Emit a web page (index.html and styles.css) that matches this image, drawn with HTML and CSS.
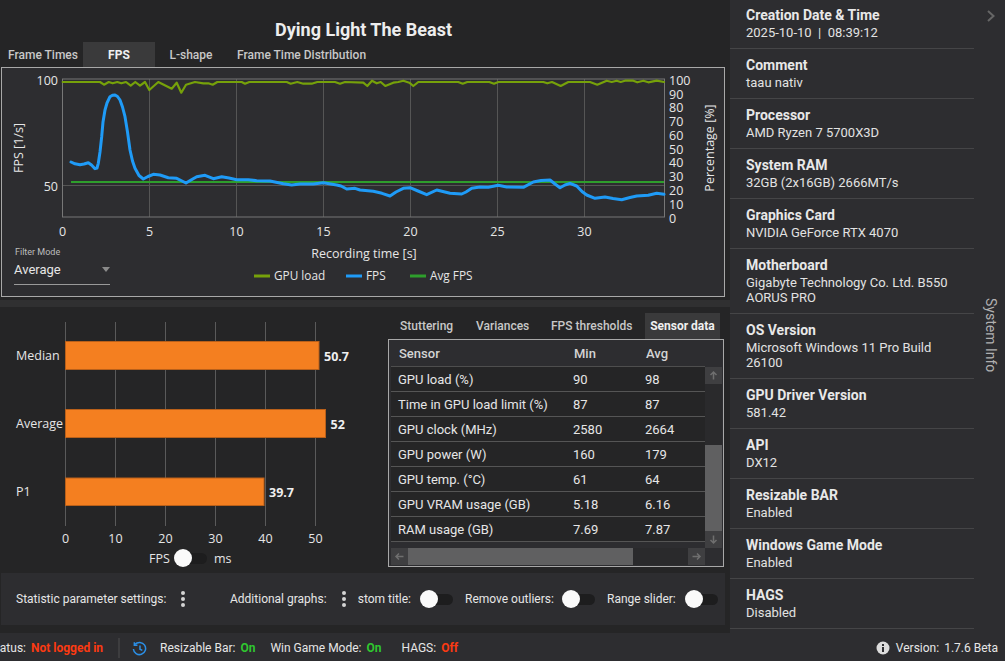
FILE: index.html
```html
<!DOCTYPE html>
<html lang="en">
<head>
<meta charset="utf-8">
<title>Dying Light The Beast</title>
<link rel="stylesheet" href="styles.css">
</head>
<body>
<div class="app">
  <main class="main">
    <h1 class="title">Dying Light The Beast</h1>
    <nav class="tabs">
      <span class="tab tab-first">Frame Times</span>
      <span class="tab active">FPS</span>
      <span class="tab">L-shape</span>
      <span class="tab">Frame Time Distribution</span>
    </nav>
    <section class="chart-card">
      <svg class="chart" viewBox="2 68 721 227" width="721" height="227">
        <g class="grid">
          <path d="M149.5 79V217M236.5 79V217M323.5 79V217M410.5 79V217M497.5 79V217M584.5 79V217M62.5 185.5H664.5"/>
        </g>
        <rect class="frame" x="62.5" y="79" width="602" height="138"/>
        <polyline class="l-gpu" points="62.7,82 100,82 104,84.7 108.7,82 112.7,83.3 117.3,82 121.3,83.3 126,82 130.7,85.7 135.3,82 140,85.7 145,82 149.3,90 158.3,82 171.7,88.7 176.7,82.7 181.3,92.7 186,84.7 195,82 203.3,83.3 208.3,83.3 212.7,84.7 217.3,82 241.7,82 245,83.7 249.3,82 286.7,82 290.7,83.7 297.3,82 303.3,83.7 311.7,83.7 317.3,82 335,82 340,83.7 345,82 363.3,82.7 367.3,86 372,80.7 376.7,83.3 380.7,82 385.3,86 393.3,82.7 398.3,82 403.3,80.7 409.3,82.7 413.3,86 418.3,82 458.3,82 462.7,83.7 467.3,82 489.3,82 494,83.7 498.3,82 543.3,82 547.3,83.3 552,82 560.7,86 568.3,82 590,82 597.3,84.7 606.7,80.7 611.7,82 616.7,80.7 620.7,82 625,80.7 633.3,80.7 637.3,82.3 643.3,80.7 648.3,82.3 656.7,80.7 664,82"/>
        <line class="l-avg" x1="71" y1="182" x2="664" y2="182"/>
        <polyline class="l-fps" points="71,162 75,163.8 80,164.7 84,164 88.3,162.7 91.5,165 95,168.7 97,168 98.3,163.3 100,152 101.7,136.7 103,122 105,110 107,103 110,96.7 112.5,95.2 115,95 117.5,96.5 120,100 122.5,107 125,116.7 127.5,132 130,150 132.5,161 135,168.3 139,175.5 143.3,179 148,176.5 153.3,174.3 160,175 168.3,177.7 176.7,178.3 181,180.5 186,183 191,180 196.7,176.7 205,175.3 213.3,178.7 221.7,176.7 229,178 236.7,179.7 248.3,179.7 256.7,180.7 270,181 283.3,183.7 291.7,185 300,184 313.3,184 323.3,182.7 336.7,185 341,186 346.7,189 355,188.3 360,190 373.3,191.3 382,193.3 390,196 396,192 403.3,188.3 410,187.7 418,191 426.7,194.7 436.7,190 450,193.3 461.7,194 466,192 471.7,188.3 480,187 488.3,187.3 498.3,185.3 506.7,187 523.3,187.3 533.3,182 541,180.6 550,180 555,184 560,187.7 565,185 570,183.3 576.7,186 582,191.5 586.7,195 595,198.3 605,197 613,198.5 621.7,199.7 630,197.5 636.7,196 648.3,195.3 656.7,193.3 664,194.3"/>
        <g class="tick">
          <text x="62.5" y="236" text-anchor="middle">0</text>
          <text x="149.5" y="236" text-anchor="middle">5</text>
          <text x="236.5" y="236" text-anchor="middle">10</text>
          <text x="323.5" y="236" text-anchor="middle">15</text>
          <text x="410.5" y="236" text-anchor="middle">20</text>
          <text x="497.5" y="236" text-anchor="middle">25</text>
          <text x="584.5" y="236" text-anchor="middle">30</text>
          <text x="58" y="85" text-anchor="end">100</text>
          <text x="58" y="191" text-anchor="end">50</text>
          <text x="669" y="85">100</text>
          <text x="669" y="99">90</text>
          <text x="669" y="112">80</text>
          <text x="669" y="126">70</text>
          <text x="669" y="140">60</text>
          <text x="669" y="154">50</text>
          <text x="669" y="167">40</text>
          <text x="669" y="181">30</text>
          <text x="669" y="195">20</text>
          <text x="669" y="209">10</text>
          <text x="669" y="223">0</text>
          <text x="364" y="258" text-anchor="middle">Recording time [s]</text>
          <text transform="translate(23 148) rotate(-90)" text-anchor="middle">FPS [1/s]</text>
          <text transform="translate(714 148) rotate(-90)" text-anchor="middle">Percentage [%]</text>
        </g>
        <g class="legend">
          <line class="k-gpu" x1="254" y1="276" x2="270" y2="276"/>
          <text x="274" y="280">GPU load</text>
          <line class="k-fps" x1="346" y1="276" x2="362" y2="276"/>
          <text x="366" y="280">FPS</text>
          <line class="k-avg" x1="410" y1="276" x2="426" y2="276"/>
          <text x="430" y="280">Avg FPS</text>
        </g>
      </svg>
      <div class="filter">
        <div class="filter-label">Filter Mode</div>
        <div class="filter-select"><span>Average</span><i class="caret"></i></div>
      </div>
    </section>
    <div class="divider"></div>
    <section class="lower">
      <div class="bars">
        <svg class="barchart" viewBox="0 315 388 232" width="388" height="232">
          <path class="bar-grid" d="M65.5 322V526M115.5 322V526M165.5 322V526M215.5 322V526M265.5 322V526M315.5 322V526"/>
          <rect class="bar" x="65.5" y="341.5" width="253.5" height="28"/>
          <rect class="bar" x="65.5" y="409.5" width="260" height="28"/>
          <rect class="bar" x="65.5" y="478" width="198.5" height="27.5"/>
          <g class="tick">
            <text x="16" y="360">Median</text>
            <text x="16" y="428">Average</text>
            <text x="16" y="496">P1</text>
            <text x="65.5" y="543" text-anchor="middle">0</text>
            <text x="115.5" y="543" text-anchor="middle">10</text>
            <text x="165.5" y="543" text-anchor="middle">20</text>
            <text x="215.5" y="543" text-anchor="middle">30</text>
            <text x="265.5" y="543" text-anchor="middle">40</text>
            <text x="315.5" y="543" text-anchor="middle">50</text>
          </g>
          <g class="bar-val">
            <text x="324" y="361">50.7</text>
            <text x="330.500" y="429">52</text>
            <text x="269" y="497">39.7</text>
          </g>
        </svg>
        <div class="unit-row">
          <span class="unit">FPS</span>
          <span class="toggle"><i></i></span>
          <span class="unit unit-ms">ms</span>
        </div>
      </div>
      <div class="sensors">
        <nav class="subtabs">
          <span class="subtab s1">Stuttering</span>
          <span class="subtab s2">Variances</span>
          <span class="subtab s3">FPS thresholds</span>
          <span class="subtab s4 active">Sensor data</span>
        </nav>
        <div class="table-card">
          <div class="table-row">
            <table class="sensor-table">
              <thead>
                <tr><th>Sensor</th><th>Min</th><th>Avg</th></tr>
              </thead>
              <tbody>
                <tr><td>GPU load (%)</td><td>90</td><td>98</td></tr>
                <tr><td>Time in GPU load limit (%)</td><td>87</td><td>87</td></tr>
                <tr><td>GPU clock (MHz)</td><td>2580</td><td>2664</td></tr>
                <tr><td>GPU power (W)</td><td>160</td><td>179</td></tr>
                <tr><td>GPU temp. (°C)</td><td>61</td><td>64</td></tr>
                <tr><td>GPU VRAM usage (GB)</td><td>5.18</td><td>6.16</td></tr>
                <tr><td>RAM usage (GB)</td><td>7.69</td><td>7.87</td></tr>
              </tbody>
            </table>
            <div class="vscroll">
              <span class="sb-btn"><svg viewBox="0 0 17 17" width="17" height="17"><path class="sb-arrow" d="M8.500 12.500V5M5.500 8l3-3 3 3"/></svg></span>
              <span class="vtrack"></span>
              <span class="vthumb"></span>
              <span class="sb-btn"><svg viewBox="0 0 17 17" width="17" height="17"><path class="sb-arrow" d="M8.500 4.500V12M5.500 9l3 3 3-3"/></svg></span>
            </div>
          </div>
          <div class="hscroll">
            <span class="sb-btn"><svg viewBox="0 0 17 17" width="17" height="17"><path class="sb-arrow" d="M12.500 8.500H5M8 5.500l-3 3 3 3"/></svg></span>
            <span class="hthumb"></span>
            <span class="htrack"></span>
            <span class="sb-btn"><svg viewBox="0 0 17 17" width="17" height="17"><path class="sb-arrow" d="M4.500 8.500H12M9 5.500l3 3-3 3"/></svg></span>
          </div>
        </div>
      </div>
    </section>
    <section class="toolbar">
      <span class="tool-text t1">Statistic parameter settings:</span>
      <svg class="dots" viewBox="0 0 6 18" width="6" height="18"><circle cx="3" cy="3" r="2"/><circle cx="3" cy="9" r="2"/><circle cx="3" cy="15" r="2"/></svg>
      <span class="tool-text t2">Additional graphs:</span>
      <svg class="dots" viewBox="0 0 6 18" width="6" height="18"><circle cx="3" cy="3" r="2"/><circle cx="3" cy="9" r="2"/><circle cx="3" cy="15" r="2"/></svg>
      <span class="clipped"><span>Custom title:</span></span>
      <span class="toggle"><i></i></span>
      <span class="tool-text t3">Remove outliers:</span>
      <span class="toggle"><i></i></span>
      <span class="tool-text t4">Range slider:</span>
      <span class="toggle"><i></i></span>
    </section>
  </main>

  <aside class="side">
    <div class="side-list">
      <div class="item"><b>Creation Date &amp; Time</b><span>2025-10-10 &nbsp;|&nbsp; 08:39:12</span></div>
      <div class="item"><b>Comment</b><span>taau nativ</span></div>
      <div class="item"><b>Processor</b><span>AMD Ryzen 7 5700X3D</span></div>
      <div class="item"><b>System RAM</b><span>32GB (2x16GB) 2666MT/s</span></div>
      <div class="item"><b>Graphics Card</b><span>NVIDIA GeForce RTX 4070</span></div>
      <div class="item"><b>Motherboard</b><span>Gigabyte Technology Co. Ltd. B550 AORUS PRO</span></div>
      <div class="item"><b>OS Version</b><span>Microsoft Windows 11 Pro Build 26100</span></div>
      <div class="item"><b>GPU Driver Version</b><span>581.42</span></div>
      <div class="item"><b>API</b><span>DX12</span></div>
      <div class="item"><b>Resizable BAR</b><span>Enabled</span></div>
      <div class="item"><b>Windows Game Mode</b><span>Enabled</span></div>
      <div class="item"><b>HAGS</b><span>Disabled</span></div>
    </div>
    <div class="strip">
      <svg class="chev" viewBox="0 0 10 14" width="10" height="14"><path d="M2 2l5.500 5L2 12"/></svg>
      <span class="strip-label">System Info</span>
    </div>
  </aside>

  <footer class="status">
    <span class="st-clip"><span>Status:</span></span>
    <b class="bad s-a">Not logged in</b>
    <span class="sep"></span>
    <svg class="refresh" viewBox="0 0 16 16" width="15" height="15"><path d="M3.200 3.600A6.500 6.500 0 1 1 1.500 8.500"/><path d="M2.500 1.200v3.300h3.300"/><path d="M8.500 4.800v4l2.500 1.200"/></svg>
    <span class="s-b">Resizable Bar:</span><b class="good">On</b>
    <span class="s-c">Win Game Mode:</span><b class="good">On</b>
    <span class="s-d">HAGS:</span><b class="bad off">Off</b>
    <span class="spacer"></span>
    <svg class="info" viewBox="0 0 14 14" width="14" height="14"><circle cx="7" cy="7" r="6.500"/><rect x="6" y="6" width="2" height="5"/><rect x="6" y="3" width="2" height="2"/></svg>
    <span class="s-e">Version:</span><span class="s-f">1.7.6 Beta</span>
  </footer>
</div>
</body>
</html>
```
FILE: styles.css
```css
* { box-sizing: border-box; }
html, body { margin: 0; padding: 0; height: 100%; }
body {
  background: #2d2d30;
  color: #e6e6e6;
  font-family: Roboto, "Liberation Sans", sans-serif;
  font-size: 13px;
  overflow: hidden;
}
.app {
  display: grid;
  grid-template-columns: 730px 275px;
  grid-template-rows: 633px 28px;
  width: 1005px;
  height: 661px;
  overflow: hidden;
}

/* main column */
.main {
  background: #252526;
  display: flex;
  flex-direction: column;
  min-width: 0;
}
.title {
  margin: 0;
  height: 42px;
  padding: 19px 3px 0 0;
  line-height: 21px;
  font-size: 18px;
  font-weight: 700;
  text-align: center;
  color: #ededed;
}
.tabs { display: flex; height: 25px; }
.tab {
  min-width: 72px;
  padding: 0 10px;
  line-height: 26px;
  font-size: 12px;
  font-weight: 500;
  text-align: center;
  color: #c8c8c8;
  white-space: nowrap;
}
.tab-first { min-width: 0; padding: 0 5px 0 8px; }
.tab.active, .subtab.active { background: #3a3a3b; color: #f0f0f0; font-weight: 700; }

.chart-card {
  position: relative;
  margin-left: 1px;
  width: 724px;
  height: 230px;
  border: 1px solid #a8a8a8;
  background: #2d2d30;
}
.chart { display: block; }
.grid path { stroke: #555; stroke-width: 1; fill: none; }
.frame { fill: none; stroke: #777; stroke-width: 1; }
.l-gpu, .l-fps { fill: none; stroke-linejoin: round; stroke-linecap: round; }
.l-gpu { stroke: #76a10a; stroke-width: 2.2; }
.l-fps { stroke: #1f9bf7; stroke-width: 3; }
.l-avg { stroke: #2e9e2c; stroke-width: 2; }
.tick text, .legend text {
  font-family: "Open Sans", "Noto Sans", sans-serif;
  font-size: 12.5px;
  fill: #e6e6e6;
}
.legend text { font-size: 11.8px; }
.k-gpu, .k-fps, .k-avg { stroke-width: 3; }
.k-gpu { stroke: #76a10a; }
.k-fps { stroke: #1f9bf7; }
.k-avg { stroke: #2e9e2c; }

.filter { position: absolute; left: 12px; top: 178px; width: 96px; }
.filter-label { font-size: 9px; line-height: 12px; color: #bdbdbd; margin-left: 1px; }
.filter-select {
  display: flex;
  align-items: center;
  justify-content: space-between;
  height: 27px;
  padding-bottom: 3px;
  font-size: 13px;
  color: #e6e6e6;
  border-bottom: 1px solid #999;
}
.caret {
  width: 0;
  height: 0;
  border-left: 4.500px solid transparent;
  border-right: 4.500px solid transparent;
  border-top: 5px solid #8a8a8a;
}

.divider { height: 7px; margin-top: 3px; background: #303031; }

/* lower */
.lower { display: flex; height: 266px; }
.bars { width: 388px; padding-top: 8px; }
.barchart { display: block; }
.bar-grid { stroke: #5a5a5a; stroke-width: 1; fill: none; }
.bar { fill: #f47f20; stroke: #b9601a; stroke-width: 1; }
.bar-val text {
  font-family: "Open Sans", "Noto Sans", sans-serif;
  font-size: 12.5px;
  font-weight: 700;
  fill: #efefef;
}
.unit-row { display: flex; align-items: center; height: 24px; padding-left: 149px; margin-top: -1px; }
.unit { font-family: "Open Sans", "Noto Sans", sans-serif; font-size: 12.5px; width: 25px; }
.unit-ms { margin-left: 7px; }

.toggle { position: relative; display: block; flex: none; width: 33px; height: 18px; }
.toggle::before {
  content: "";
  position: absolute;
  left: 9px;
  right: 0;
  top: 3.500px;
  height: 11px;
  border-radius: 6px;
  background: #1d1d1e;
}
.toggle i {
  position: absolute;
  left: 0;
  top: 0;
  width: 18px;
  height: 18px;
  border-radius: 50%;
  background: #fafafa;
}

.sensors { width: 336px; padding-top: 6px; }
.subtabs { display: flex; height: 26px; font-size: 12px; font-weight: 500; color: #c8c8c8; white-space: nowrap; }
.subtab { line-height: 27px; flex: none; }
.s1 { margin-left: 12px; width: 76px; }
.s2 { width: 75px; }
.s3 { width: 94px; }
.s4 { width: 75px; text-align: center; }
.table-card {
  width: 336px;
  height: 228px;
  border: 1px solid #a8a8a8;
  background: #2d2d30;
  padding-left: 2px;
}
.table-row { display: flex; height: 208px; }
.sensor-table {
  width: 314px;
  height: 202px;
  border-collapse: collapse;
  table-layout: fixed;
  align-self: flex-start;
  color: #e6e6e6;
}
.sensor-table th {
  height: 26px;
  padding: 1px 0 0;
  text-align: left;
  font-weight: 500;
  font-size: 13px;
  color: #d4d4d4;
  border-bottom: 1px solid #4e4e4e;
}
.sensor-table td {
  height: 25px;
  padding: 1px 0 0;
  font-size: 13px;
  border-bottom: 1px solid #555;
  background: #252526;
}
.sensor-table th:first-child { width: 182px; padding-left: 8px; }
.sensor-table td:first-child { padding-left: 7px; }
.sensor-table th:nth-child(2), .sensor-table td:nth-child(2) { width: 72px; }
.sensor-table th:nth-child(2), .sensor-table th:nth-child(3) { padding-left: 1px; }

.vscroll {
  display: flex;
  flex-direction: column;
  width: 17px;
  margin-top: 27px;
  height: 181px;
  background: #2a2a2c;
}
.sb-btn { display: block; flex: none; width: 17px; height: 17px; background: #3f3f41; }
.sb-btn svg { display: block; }
.sb-arrow { fill: none; stroke: #6f6f6f; stroke-width: 1.500; }
.vtrack { height: 61px; flex: none; }
.vthumb { height: 86px; flex: none; background: #606061; }
.hscroll { display: flex; width: 314px; height: 17px; }
.hthumb { width: 225px; background: #606061; }
.htrack { flex: 1; background: #2a2a2c; }

/* toolbar */
.toolbar {
  display: flex;
  align-items: center;
  margin-left: 1px;
  width: 724px;
  height: 52px;
  padding-left: 15px;
  background: #2d2d30;
  font-size: 12px;
}
.tool-text { white-space: nowrap; flex: none; }
.dots { flex: none; fill: #d4d4d4; }
.t1 { width: 164px; }
.t2 { margin-left: 44px; width: 111px; }
.clipped {
  display: flex;
  justify-content: flex-end;
  flex: none;
  width: 53px;
  margin-right: 9px;
  margin-left: 11px;
  overflow: hidden;
  white-space: nowrap;
}
.t3 { margin-left: 12px; width: 97px; }
.t4 { margin-left: 12px; width: 78px; }

/* sidebar */
.side { display: flex; background: #2d2d30; overflow: hidden; min-width: 0; }
.side-list { width: 244px; margin-top: -1px; flex: none; }
.item {
  display: flex;
  flex-direction: column;
  padding: 8px 20px 8px 16px;
  border-bottom: 1px solid #454547;
  min-height: 50px;
}
.item b { font-size: 14px; font-weight: 700; line-height: 16px; color: #e8e8e8; }
.item span { font-size: 13px; line-height: 15px; margin-top: 2px; color: #e2e2e2; }
.strip {
  flex: 1;
  display: flex;
  flex-direction: column;
  align-items: center;
}
.chev { margin-top: 9px; margin-left: 3px; fill: none; stroke: #666; stroke-width: 2; }
.strip-label {
  margin-top: 275px;
  margin-left: 3px;
  writing-mode: vertical-rl;
  font-size: 14px;
  color: #b0b0b0;
}

/* status */
.status {
  grid-column: 1 / -1;
  display: flex;
  align-items: center;
  background: #2d2d30;
  font-size: 12px;
  white-space: nowrap;
  padding: 2px 7px 0 0;
}
.st-clip { display: flex; justify-content: flex-end; width: 26px; overflow: hidden; flex: none; }
.bad { color: #fb3a12; font-weight: 700; }
.good { color: #2fc62f; font-weight: 700; margin-left: 5px; }
.s-a { margin-left: 5px; }
.sep { width: 2px; height: 20px; margin-left: 15px; background: #3d3d3f; flex: none; }
.refresh { flex: none; margin-left: 12px; fill: none; stroke: #2b8fe6; stroke-width: 1.600; }
.s-b { margin-left: 13px; }
.s-c { margin-left: 15px; }
.s-d { margin-left: 20px; }
.off { margin-left: 5px; }
.spacer { flex: 1; }
.info { flex: none; }
.info circle { fill: #dcdcdc; }
.info rect { fill: #2d2d30; }
.s-e { margin-left: 6px; }
.s-f { margin-left: 5px; }
```
